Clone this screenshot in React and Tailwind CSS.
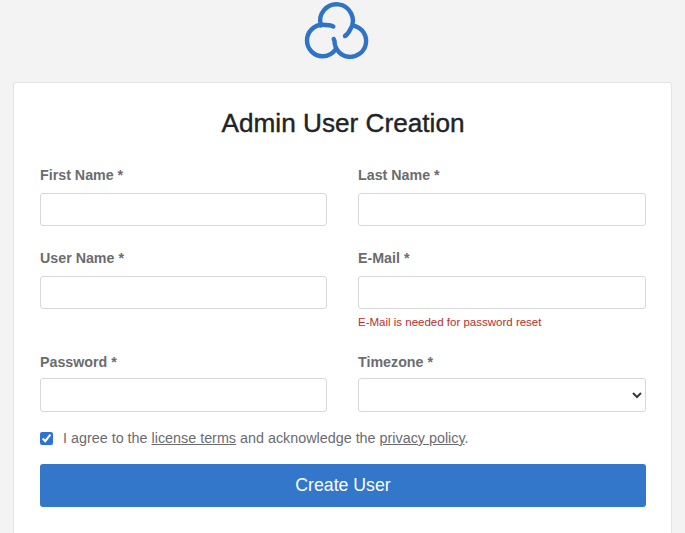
const ff = "font-['Liberation_Sans',Arial,sans-serif]";

function Logo() {
  return (
    <svg width="70" height="64" viewBox="302 0 70 64" fill="none" stroke="#2f72c6" strokeWidth="4.4" strokeLinecap="round" className="block">
      <path d="M321 25.5 A16.3 16.3 0 1 1 350.5 29 C349 32 347.5 34.5 345 36" />
      <path d="M333.3 26.5 C330 25 327 24.8 322.7 24.8 A15.7 15.7 0 0 0 322.7 56.2 A15.7 15.7 0 0 0 335.5 49.5" />
      <path d="M333.7 39 L334.5 41 A15.8 15.8 0 1 0 354.5 25.8" />
    </svg>
  );
}

function Field({ label, note, children, mb, gap = "mb-[8px]" }) {
  return (
    <div className={mb}>
      <label className={`block text-[14.25px] leading-[20px] font-bold text-[#6b6c70] ${gap}`}>{label}</label>
      {children}
      {note}
    </div>
  );
}

function Input({ tall }) {
  return <input className={`block w-full ${tall ? "h-[34px]" : "h-[33px]"} bg-white border border-[#d6d8db] rounded-[3px]`} />;
}

export default function App() {
  return (
    <div className={`${ff} h-[533px] overflow-hidden bg-[#f3f3f4] flex flex-col`}>
      <div className="h-[82px] pl-[302px] shrink-0">
        <Logo />
      </div>
      <div className="ml-[13px] w-[659px] flex-1 bg-white border border-[#e3e4e6] border-b-0 rounded-t-[3px] pl-[26px] pr-[25px] pt-[23px]">
        <h1 className="text-center text-[26.2px] leading-[34px] font-medium text-[#212327] [-webkit-text-stroke:0.4px_#212327] mb-[25px]">Admin User Creation</h1>
        <div className="grid grid-cols-[287px_288px] gap-x-[31px]">
          <Field label="First Name *" mb="mb-[22px]"><Input /></Field>
          <Field label="Last Name *" mb="mb-[22px]"><Input /></Field>
          <Field label="User Name *"><Input /></Field>
          <Field
            label="E-Mail *"
            mb="mb-[23px]"
            note={<p className="text-[11.5px] leading-[14px] text-[#b5302d] mt-[6px]">E-Mail is needed for password reset</p>}
          ><Input /></Field>
          <Field label="Password *" gap="mb-[6px]"><Input tall /></Field>
          <Field label="Timezone *" gap="mb-[6px]">
            <div className="relative">
              <select className="block w-full h-[34px] bg-white border border-[#d6d8db] rounded-[3px] appearance-none" />
              <svg width="10" height="7" viewBox="0 0 10 7" fill="none" stroke="#3a3b3f" strokeWidth="2" className="absolute right-[4px] top-[14px]">
                <path d="M1 1l4 4 4-4" />
              </svg>
            </div>
          </Field>
        </div>
        <div className="flex items-center mt-[16px] h-[20px]">
          <input type="checkbox" defaultChecked className="w-[13px] h-[13px] accent-[#2f72d6] m-0" />
          <span className="ml-[10px] text-[14.35px] leading-[20px] text-[#6b6c70]">
            I agree to the <a className="underline">license terms</a> and acknowledge the <a className="underline">privacy policy</a>.
          </span>
        </div>
        <button className="mt-[16px] block w-full h-[43px] bg-[#3277c9] rounded-[3px] text-white text-[17.7px]">Create User</button>
      </div>
    </div>
  );
}
